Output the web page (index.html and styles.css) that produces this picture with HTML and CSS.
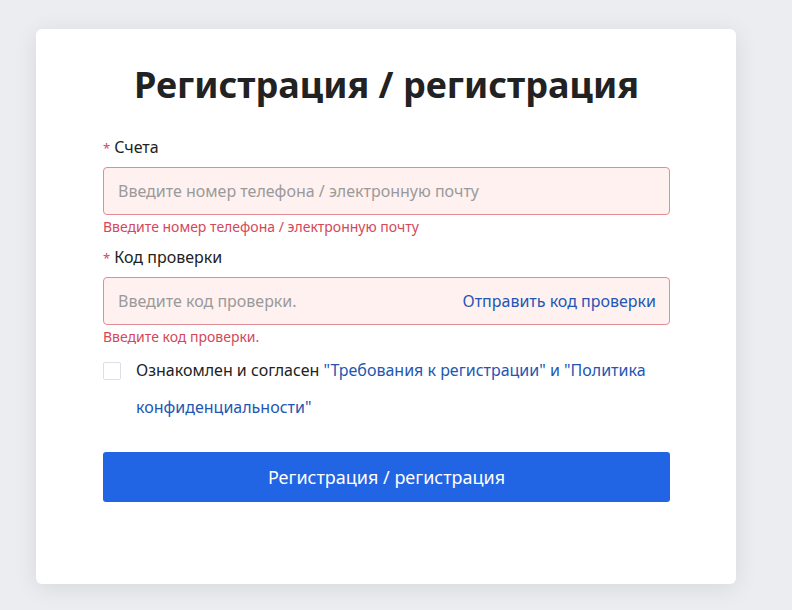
FILE: index.html
```html
<!DOCTYPE html>
<html lang="ru">

<head>
    <meta charset="utf-8" />
    <title>Регистрация</title>
    <link rel="stylesheet" href="styles.css">
</head>

<body>
    <div class="card">
        <h1 class="title">Регистрация / регистрация</h1>

        <div class="field">
            <label class="label"><span class="req">*</span> Счета</label>
            <div class="input error">
                <input type="text" placeholder="Введите номер телефона / электронную почту" />
            </div>
            <div class="msg">Введите номер телефона / электронную почту</div>
        </div>

        <div class="field">
            <label class="label"><span class="req">*</span> Код проверки</label>
            <div class="input error">
                <input type="text" placeholder="Введите код проверки." />
                <a class="send" href="#">Отправить код проверки</a>
            </div>
            <div class="msg">Введите код проверки.</div>
        </div>

        <div class="agree">
            <span class="box"></span>
            <p>Ознакомлен и согласен <a href="#">"Требования к регистрации" и "Политика конфиденциальности"</a></p>
        </div>

        <button class="submit">Регистрация / регистрация</button>
    </div>
</body>

</html>
```

FILE: styles.css
```css
html {
    font-family: "Noto Sans", "Open Sans", sans-serif;
}

body {
    margin: 0;
    background: #ebedf1;
    height: 610px;
    overflow: hidden;
}

.card {
    width: 700px;
    box-sizing: border-box;
    margin: 29px 0 0 36px;
    height: 555px;
    background: #fff;
    border-radius: 6px;
    box-shadow: 0 4px 24px rgba(0, 0, 0, 0.09);
    padding: 30px 66px 0 67px;
}

.title {
    margin: 0 0 24px;
    text-align: center;
    font-size: 36px;
    font-weight: 700;
    line-height: 52px;
    color: #222;
}

.field {
    margin-bottom: 8px;
}

.label {
    display: block;
    font-size: 16px;
    line-height: 24px;
    color: #222;
    margin-bottom: 7px;
}

.req {
    color: #d0476b;
    font-size: 13px;
}

.input {
    display: flex;
    align-items: center;
    height: 48px;
    box-sizing: border-box;
    border: 1px solid #dcdfe6;
    border-radius: 4px;
    padding: 0 13px 0 14px;
}

.input.error {
    border-color: #e28d94;
    background: #fff1f0;
}

.input input {
    flex: 1;
    border: 0;
    outline: 0;
    background: transparent;
    font-family: inherit;
    font-size: 16px;
    color: #333;
    padding: 0;
}

.input input::placeholder {
    color: #9a9a9a;
}

.send {
    color: #2356b3;
    text-decoration: none;
    font-size: 16px;
    white-space: nowrap;
}

.msg {
    color: #d4485a;
    font-size: 14px;
    line-height: 20px;
    margin-top: 2px;
}

.agree {
    display: flex;
    align-items: flex-start;
    margin-top: 13px;
}

.box {
    flex: none;
    width: 16px;
    height: 16px;
    border: 1px solid #dcdfe6;
    border-radius: 2px;
    margin: 2px 15px 0 0;
}

.agree p {
    margin: -8px 0 0;
    font-size: 16px;
    line-height: 37px;
    color: #222;
}

.agree a {
    color: #2356b3;
    text-decoration: none;
}

.submit {
    display: block;
    width: 100%;
    height: 50px;
    margin-top: 26px;
    border: 0;
    border-radius: 3px;
    background: #2164e4;
    color: #fff;
    font-family: inherit;
    font-size: 18px;
}
```
